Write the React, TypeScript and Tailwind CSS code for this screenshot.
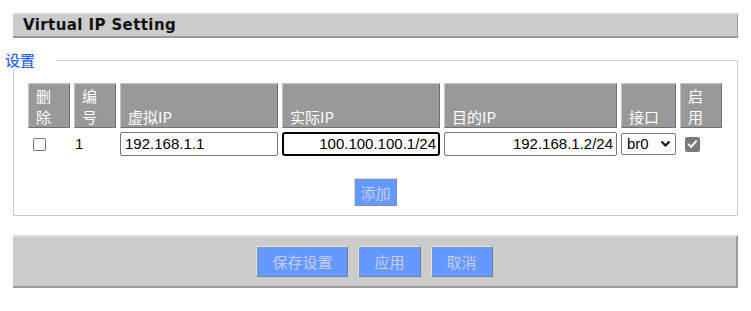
const cols = [
  { label: ["删", "除"], w: "w-[42px]" },
  { label: ["编", "号"], w: "w-[42px]" },
  { label: ["", "虚拟IP"], w: "w-[158px]" },
  { label: ["", "实际IP"], w: "w-[158px]" },
  { label: ["", "目的IP"], w: "w-[173px]" },
  { label: ["", "接口"], w: "w-[55px]" },
  { label: ["启", "用"], w: "w-[42px]" },
];

const cjk = { fontFamily: '"Noto Sans CJK SC", sans-serif' };

const App = () => {
  return (
    <div className="w-[751px] h-[311px] bg-white overflow-hidden pt-[13px]" style={cjk}>
      {/* Title */}
      <div className="mx-[13px] h-[25px] bg-[#cccccc] border-t border-t-[#dddddd] border-b-2 border-b-[#999999] border-r border-r-[#999999] flex items-center pl-[10px]">
        <span
          className="text-[15px] font-bold text-[#111] tracking-[0.4px]"
          style={{ fontFamily: '"DejaVu Sans", Verdana, sans-serif' }}
        >
          Virtual IP Setting
        </span>
      </div>

      {/* Settings fieldset */}
      <fieldset className="mx-[13px] mt-[12px] border border-[#cccccc] px-[14px] pt-[13px] pb-[9px]">
        <legend className="ml-[-23px] pr-[21px] text-[15px] leading-[20px] font-medium text-[#3366ff] bg-white">设置</legend>

        <div className="flex gap-[4px]">
          {cols.map((c, i) => (
            <div
              key={i}
              className={`${c.w} h-[45px] bg-[#999999] border border-t-[#c4c4c4] border-l-[#c4c4c4] border-r-[#6f6f6f] border-b-[#6f6f6f] text-white text-[15px] leading-[21px] pl-[7px] pt-[1px] flex flex-col`}
            >
              <span className="h-[21px]">{c.label[0]}</span>
              <span className="h-[21px]">{c.label[1]}</span>
            </div>
          ))}
        </div>

        {/* Data row */}
        <div className="flex gap-[4px] mt-[4px] h-[24px] items-center" style={{ fontFamily: '"Liberation Sans", Arial, sans-serif' }}>
          <div className="w-[42px] pl-[5px] flex items-center">
            <span className="w-[13px] h-[13px] border border-[#767676] rounded-[2px] bg-white" />
          </div>
          <div className="w-[42px] pl-[1px] text-[15px] text-[#111]">1</div>
          <div className="w-[158px] h-[24px] border border-[#767676] rounded-[2px] px-[4px] flex items-center text-[15px] text-black">
            192.168.1.1
          </div>
          <div className="w-[158px] h-[24px] border-2 border-black rounded-[3px] px-[2px] flex items-center justify-end text-[15px] text-black">
            100.100.100.1/24
          </div>
          <div className="w-[173px] h-[24px] border border-[#767676] rounded-[2px] px-[3px] flex items-center justify-end text-[15px] text-black">
            192.168.1.2/24
          </div>
          <div className="w-[55px] h-[22px] border border-[#767676] rounded-[2px] pl-[5px] pr-[4px] flex items-center justify-between text-[15px] text-black">
            <span>br0</span>
            <svg width="11" height="8" viewBox="0 0 11 8">
              <path d="M1.5 1.5 L5.5 5.5 L9.5 1.5" fill="none" stroke="#111" strokeWidth="2.2" />
            </svg>
          </div>
          <div className="w-[42px] pl-[5px] flex items-center">
            <span className="w-[15px] h-[15px] rounded-[2px] bg-[#7a7a7a] flex items-center justify-center">
              <svg width="11" height="10" viewBox="0 0 11 10">
                <path d="M1.3 5 L4.2 7.8 L9.6 1.6" fill="none" stroke="#fff" strokeWidth="2" />
              </svg>
            </span>
          </div>
        </div>

        <div className="flex justify-center mt-[22px]">
          <button className="h-[28px] px-[5px] bg-[#6699ff] text-[#c6ccff] text-[15px] leading-none border border-t-[#cfd8ee] border-l-[#cfd8ee] border-r-[#8a8a8a] border-b-[#8a8a8a]">
            添加
          </button>
        </div>
      </fieldset>

      {/* Bottom bar */}
      <div className="mx-[13px] mt-[19px] h-[53px] bg-[#cccccc] border-t-2 border-t-[#dddddd] border-b-2 border-b-[#999999] border-r-2 border-r-[#999999] flex items-center justify-center gap-[10px]">
        {["保存设置", "应用", "取消"].map((t) => (
          <button
            key={t}
            className="h-[31px] px-[15px] bg-[#6699ff] text-[#c6ccff] text-[15px] leading-none border border-t-[#dde3f3] border-l-[#dde3f3] border-r-[#7f7f7f] border-b-[#7f7f7f]"
          >
            {t}
          </button>
        ))}
      </div>
    </div>
  );
};

export default App;
